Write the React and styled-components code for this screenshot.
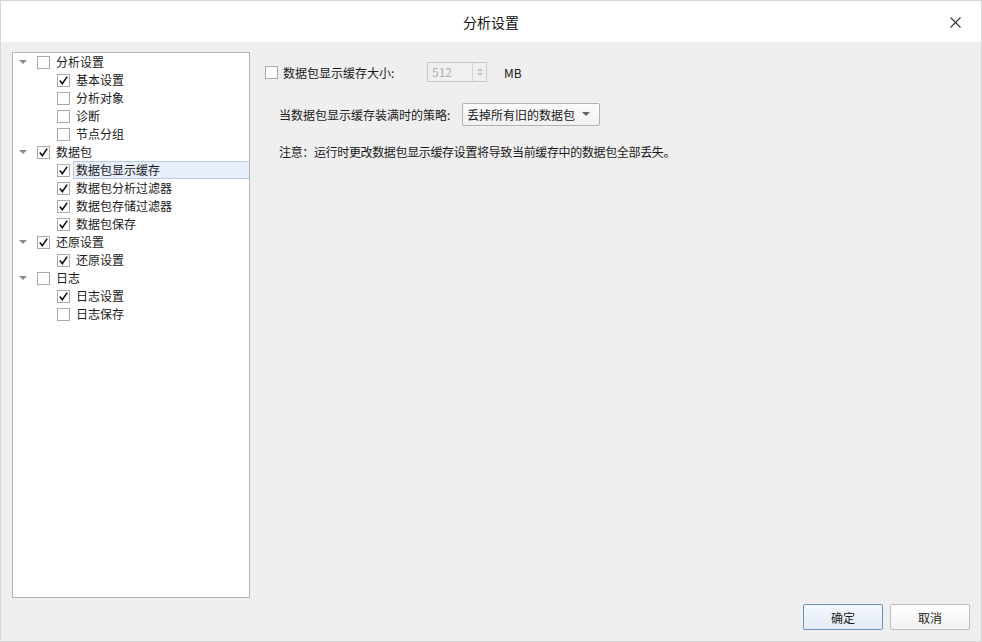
import React from 'react';
import styled, { createGlobalStyle } from 'styled-components';

const GlobalStyle = createGlobalStyle`
  html, body {
    margin: 0;
    padding: 0;
    background: #ffffff;
  }
  body {
    font-family: "Noto Sans CJK SC", "Noto Sans", "Liberation Sans", sans-serif;
    font-size: 12px;
    color: #1a1a1a;
  }
`;

const Window = styled.div`
  width: 982px;
  height: 642px;
  box-sizing: border-box;
  border: 1px solid #d6d6d6;
  display: flex;
  flex-direction: column;
  background: #efefef;
`;

const TitleBar = styled.div`
  height: 41px;
  flex-shrink: 0;
  background: #ffffff;
  display: flex;
  align-items: center;
  justify-content: center;
  position: relative;
  font-size: 14px;
  color: #111;
`;

const CloseButton = styled.button`
  position: absolute;
  right: 18px;
  top: 13px;
  width: 16px;
  height: 16px;
  padding: 0;
  border: none;
  background: none;
  cursor: pointer;
  display: flex;
  align-items: center;
  justify-content: center;
`;

const Body = styled.div`
  flex: 1;
  display: flex;
  flex-direction: column;
  padding: 10px 11px 11px 11px;
  min-height: 0;
`;

const Content = styled.div`
  flex: 1;
  display: flex;
  gap: 15px;
  min-height: 0;
`;

const TreePanel = styled.div`
  width: 238px;
  box-sizing: border-box;
  background: #ffffff;
  border: 1px solid #b4b4b4;
`;

const TreeRow = styled.div`
  height: 18px;
  display: flex;
  align-items: center;
  padding-left: ${({ $level }) => ($level === 0 ? 6 : 44)}px;
`;

const Arrow = styled.span`
  width: 0;
  height: 0;
  border-left: 4px solid transparent;
  border-right: 4px solid transparent;
  border-top: 4px solid #8a8a8a;
  margin-right: 10px;
  margin-left: 0;
`;

const Box = styled.span`
  width: 13px;
  height: 13px;
  box-sizing: border-box;
  border: 1px solid #a9a9a9;
  background: #ffffff;
  display: inline-flex;
  align-items: center;
  justify-content: center;
  flex-shrink: 0;
`;

const Label = styled.span`
  margin-left: ${({ $sel }) => ($sel ? 3 : 6)}px;
  line-height: 16px;
  white-space: nowrap;
  ${({ $sel }) =>
    $sel &&
    `
    flex: 1;
    background: #e6eef9;
    border: 1px solid #b9cbe6;
    border-right: none;
    padding-left: 2px;
    height: 18px;
    box-sizing: border-box;
    line-height: 16px;
  `}
`;

const RightPanel = styled.div`
  flex: 1;
  display: flex;
  flex-direction: column;
  padding-top: 10px;
`;

const FieldRow = styled.div`
  display: flex;
  align-items: center;
  height: 20px;
  padding-left: ${({ $indent }) => $indent || 0}px;
  margin-bottom: ${({ $mb }) => $mb || 0}px;
`;

const FieldLabel = styled.span`
  margin-left: ${({ $ml }) => $ml || 0}px;
  width: ${({ $w }) => ($w ? `${$w}px` : 'auto')};
  white-space: nowrap;
`;

const SpinBox = styled.div`
  width: 60px;
  height: 20px;
  box-sizing: border-box;
  border: 1px solid #c8c8c8;
  background: #f0f0f0;
  display: flex;
`;

const SpinText = styled.span`
  flex: 1;
  color: #b0b0b0;
  padding-left: 4px;
  line-height: 18px;
`;

const SpinButtons = styled.span`
  width: 13px;
  border-left: 1px solid #d2d2d2;
  display: flex;
  flex-direction: column;
  align-items: center;
  justify-content: center;
  gap: 2px;
`;

const SpinArrow = styled.span`
  width: 0;
  height: 0;
  border-left: 3px solid transparent;
  border-right: 3px solid transparent;
  ${({ $up }) => ($up ? 'border-bottom: 3px solid #c4c4c4;' : 'border-top: 3px solid #c4c4c4;')}
`;

const Unit = styled.span`
  margin-left: 17px;
`;

const Combo = styled.div`
  width: 138px;
  height: 23px;
  box-sizing: border-box;
  border: 1px solid #b2b2b2;
  border-radius: 2px;
  background: linear-gradient(#fbfbfb, #f1f1f1);
  display: flex;
  align-items: center;
  padding: 0 9px 0 4px;
  justify-content: space-between;
`;

const ComboArrow = styled.span`
  width: 0;
  height: 0;
  border-left: 4px solid transparent;
  border-right: 4px solid transparent;
  border-top: 4px solid #666;
`;

const Note = styled.div`
  padding-left: 14px;
  margin-top: 19px;
  line-height: 18px;
  white-space: nowrap;
  letter-spacing: -0.35px;
`;

const Footer = styled.div`
  flex-shrink: 0;
  display: flex;
  justify-content: flex-end;
  gap: 7px;
  padding-top: 6px;
`;

const Button = styled.button`
  width: 80px;
  height: 26px;
  box-sizing: border-box;
  font-family: inherit;
  font-size: 12px;
  color: #1a1a1a;
  border-radius: 2px;
  border: 1px solid ${({ $primary }) => ($primary ? '#6a8fbf' : '#bdbdbd')};
  background: ${({ $primary }) =>
    $primary ? 'linear-gradient(#f3f7fc, #e4ecf6)' : 'linear-gradient(#ffffff, #f3f3f3)'};
  cursor: pointer;
`;

const Check = ({ checked }) => (
  <Box>
    {checked && (
      <svg width="11" height="11" viewBox="0 0 11 11">
        <path d="M1.8 5.6 L4.3 8.6 L9.2 1.6" fill="none" stroke="#111" strokeWidth="1.6" />
      </svg>
    )}
  </Box>
);

const tree = [
  { label: '分析设置', level: 0, checked: false },
  { label: '基本设置', level: 1, checked: true },
  { label: '分析对象', level: 1, checked: false },
  { label: '诊断', level: 1, checked: false },
  { label: '节点分组', level: 1, checked: false },
  { label: '数据包', level: 0, checked: true },
  { label: '数据包显示缓存', level: 1, checked: true, selected: true },
  { label: '数据包分析过滤器', level: 1, checked: true },
  { label: '数据包存储过滤器', level: 1, checked: true },
  { label: '数据包保存', level: 1, checked: true },
  { label: '还原设置', level: 0, checked: true },
  { label: '还原设置', level: 1, checked: true },
  { label: '日志', level: 0, checked: false },
  { label: '日志设置', level: 1, checked: true },
  { label: '日志保存', level: 1, checked: false },
];

export default function App() {
  return (
    <>
      <GlobalStyle />
      <Window>
        <TitleBar>
          分析设置
          <CloseButton aria-label="关闭">
            <svg width="13" height="13" viewBox="0 0 13 13">
              <path d="M1.5 1.5 L11.5 11.5 M11.5 1.5 L1.5 11.5" stroke="#333" strokeWidth="1.1" />
            </svg>
          </CloseButton>
        </TitleBar>
        <Body>
          <Content>
            <TreePanel>
              {tree.map((item, i) => (
                <TreeRow key={i} $level={item.level}>
                  {item.level === 0 && <Arrow />}
                  <Check checked={item.checked} />
                  <Label $sel={item.selected}>{item.label}</Label>
                </TreeRow>
              ))}
            </TreePanel>
            <RightPanel>
              <FieldRow $mb={22}>
                <Check checked={false} />
                <FieldLabel $ml={5} $w={144}>数据包显示缓存大小:</FieldLabel>
                <SpinBox>
                  <SpinText>512</SpinText>
                  <SpinButtons>
                    <SpinArrow $up />
                    <SpinArrow />
                  </SpinButtons>
                </SpinBox>
                <Unit>MB</Unit>
              </FieldRow>
              <FieldRow $indent={14}>
                <FieldLabel $w={183}>当数据包显示缓存装满时的策略:</FieldLabel>
                <Combo>
                  <span>丢掉所有旧的数据包</span>
                  <ComboArrow />
                </Combo>
              </FieldRow>
              <Note>注意：运行时更改数据包显示缓存设置将导致当前缓存中的数据包全部丢失。</Note>
            </RightPanel>
          </Content>
          <Footer>
            <Button $primary>确定</Button>
            <Button>取消</Button>
          </Footer>
        </Body>
      </Window>
    </>
  );
}
